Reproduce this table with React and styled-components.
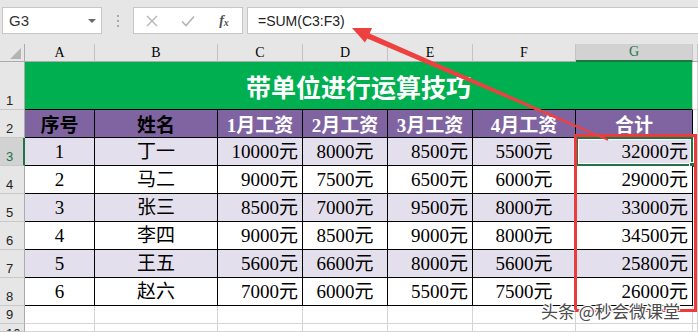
import React from 'react';
import styled, { createGlobalStyle } from 'styled-components';

const Global = createGlobalStyle`
  html, body { margin: 0; padding: 0; background: #e6e6e6; }
  body { width: 698px; height: 332px; overflow: hidden; font-family: "Liberation Sans", "Noto Sans CJK SC", sans-serif; }
  * { box-sizing: border-box; }
`;

const Page = styled.div`
  position: relative;
  width: 698px;
  height: 332px;
  overflow: hidden;
  background: #e6e6e6;
`;

const FormulaBar = styled.div`
  display: flex;
  align-items: center;
  height: 44px;
  padding: 7px 0 10px 2px;
`;

const NameBox = styled.div`
  display: flex;
  align-items: center;
  justify-content: space-between;
  width: 100px;
  height: 27px;
  padding: 0 5px 0 6px;
  background: #fff;
  border: 1px solid #c6c6c6;
  font-size: 15px;
  color: #333;
`;

const Caret = styled.span`
  width: 0;
  height: 0;
  border-left: 4px solid transparent;
  border-right: 4px solid transparent;
  border-top: 4px solid #6a6a6a;
`;

const Grip = styled.div`
  display: flex;
  flex-direction: column;
  align-items: center;
  justify-content: center;
  gap: 3px;
  width: 31px;
  height: 27px;
`;

const GripDot = styled.span`
  width: 2px;
  height: 2px;
  background: #a8a8a8;
`;

const FxBox = styled.div`
  display: flex;
  align-items: center;
  width: 110px;
  height: 27px;
  background: #fff;
  border: 1px solid #c6c6c6;
`;

const FxSlot = styled.div`
  display: flex;
  align-items: center;
  justify-content: center;
  width: 36px;
  height: 100%;
  color: ${p => (p.$dark ? '#505050' : '#b4b4b4')};
  font-family: "Liberation Serif", serif;
  font-style: italic;
  font-weight: bold;
  font-size: 14px;
`;

const FxSub = styled.span`
  font-size: 10px;
  margin-top: 4px;
`;

const FormulaInput = styled.div`
  flex: 1;
  display: flex;
  align-items: center;
  height: 27px;
  margin-left: 4px;
  padding-left: 10px;
  background: #fff;
  border: 1px solid #c6c6c6;
  border-right: none;
  font-size: 14px;
  color: #222;
`;

const Sheet = styled.div`
  display: grid;
  grid-template-columns: 25px 70px 123px 85px 85px 85px 103px 117px 1fr;
  grid-template-rows: 18px 48px repeat(7, 28px) 18px 1fr;
  height: 288px;
  background: #fff;
`;

const Corner = styled.div`
  display: flex;
  align-items: flex-end;
  justify-content: flex-end;
  padding: 0 3px 2px 0;
  background: #e6e6e6;
  border-right: 1px solid #ababab;
  border-bottom: 1px solid #ababab;
`;

const CornerMark = styled.span`
  width: 0;
  height: 0;
  border-left: 11px solid transparent;
  border-bottom: 11px solid #b4b4b4;
`;

const ColHead = styled.div`
  display: flex;
  align-items: center;
  justify-content: center;
  background: ${p => (p.$active ? '#d2d2d2' : '#e6e6e6')};
  border-right: 1px solid #c4c4c4;
  border-bottom: ${p => (p.$active ? '2px solid #217346' : '1px solid #ababab')};
  color: ${p => (p.$active ? '#217346' : '#000')};
  font-family: "Liberation Serif", serif;
  font-size: 14px;
`;

const RowHead = styled.div`
  display: flex;
  align-items: ${p => (p.$top ? 'flex-start' : 'flex-end')};
  overflow: hidden;
  padding: ${p => (p.$top ? '3px 0 0 6px' : '0 0 2px 6px')};
  background: ${p => (p.$active ? '#d2d2d2' : '#e6e6e6')};
  border-right: ${p => (p.$active ? '2px solid #217346' : '1px solid #ababab')};
  border-bottom: 1px solid #c8c8c8;
  color: ${p => (p.$active ? '#217346' : '#222')};
  font-size: 13px;
  line-height: 13px;
`;

const TitleCell = styled.div`
  grid-column: span 7;
  display: flex;
  align-items: center;
  justify-content: center;
  background: #00b050;
  border-right: 1px solid #d4d4d4;
  border-bottom: 1px solid #000;
  color: #fff;
  font-family: "Noto Sans CJK SC", sans-serif;
  font-weight: bold;
  font-size: 25px;
`;

const HeadCell = styled.div`
  display: flex;
  align-items: center;
  justify-content: center;
  background: #8064a2;
  border-right: 1px solid #000;
  border-bottom: 1px solid #000;
  color: ${p => (p.$dark ? '#000' : '#fff')};
  font-family: "Liberation Serif", "Noto Sans CJK SC", serif;
  font-weight: bold;
  font-size: 19px;
`;

const DataCell = styled.div`
  position: relative;
  display: flex;
  align-items: center;
  justify-content: ${p => p.$align};
  padding: 0 4px;
  background: ${p => (p.$band ? '#e4dfec' : '#fff')};
  border-right: 1px solid #000;
  border-bottom: 1px solid #000;
  color: #000;
  font-family: "Liberation Serif", "Noto Sans CJK SC", serif;
  font-size: 19px;
  line-height: 22px;
`;

const Blank = styled.div`
  background: #fff;
  border-right: 1px solid #d4d4d4;
  border-bottom: 1px solid #d4d4d4;
`;

const Selection = styled.div`
  position: absolute;
  top: -1px;
  left: 0;
  right: -1px;
  bottom: -1px;
  border: 2px solid #217346;
  box-shadow: inset 0 0 0 1px #fff;
`;

const FillHandle = styled.div`
  position: absolute;
  right: -4px;
  bottom: -4px;
  width: 6px;
  height: 6px;
  background: #217346;
  border: 1px solid #fff;
`;

const RedBox = styled.div`
  position: absolute;
  left: 574px;
  top: 134px;
  width: 123px;
  height: 178px;
  border: 3px solid #ec3b3b;
  pointer-events: none;
`;

const Annotation = styled.svg`
  position: absolute;
  left: 0;
  top: 0;
  pointer-events: none;
`;

const Watermark = styled.div`
  position: absolute;
  left: 541px;
  top: 303px;
  font-family: "Noto Sans CJK SC", sans-serif;
  font-size: 17px;
  line-height: 16px;
  color: #4a4a4a;
  text-shadow: 1px 1px 0 #fff, -1px -1px 0 #fff, 1px -1px 0 #fff, -1px 1px 0 #fff, 0 0 2px #fff;
  white-space: nowrap;
`;

const letters = ['A', 'B', 'C', 'D', 'E', 'F', 'G'];
const headers = ['序号', '姓名', '1月工资', '2月工资', '3月工资', '4月工资', '合计'];
const aligns = ['center', 'center', 'flex-end', 'center', 'flex-end', 'center', 'flex-end'];
const rows = [
  ['1', '丁一', '10000元', '8000元', '8500元', '5500元', '32000元'],
  ['2', '马二', '9000元', '7500元', '6500元', '6000元', '29000元'],
  ['3', '张三', '8500元', '7000元', '9500元', '8000元', '33000元'],
  ['4', '李四', '9000元', '8500元', '9000元', '8000元', '34500元'],
  ['5', '王五', '5600元', '6600元', '8000元', '5600元', '25800元'],
  ['6', '赵六', '7000元', '6000元', '5500元', '7500元', '26000元'],
];

export default function App() {
  return (
    <Page>
      <Global />
      <FormulaBar>
        <NameBox>
          <span>G3</span>
          <Caret />
        </NameBox>
        <Grip>
          <GripDot />
          <GripDot />
          <GripDot />
        </Grip>
        <FxBox>
          <FxSlot>
            <svg width="12" height="12" viewBox="0 0 12 12">
              <path d="M1 1 L11 11 M11 1 L1 11" stroke="#b4b4b4" strokeWidth="1.4" fill="none" />
            </svg>
          </FxSlot>
          <FxSlot>
            <svg width="14" height="12" viewBox="0 0 14 12">
              <path d="M1 6.5 L5 10.5 L13 1.5" stroke="#b4b4b4" strokeWidth="1.6" fill="none" />
            </svg>
          </FxSlot>
          <FxSlot $dark>
            f<FxSub>x</FxSub>
          </FxSlot>
        </FxBox>
        <FormulaInput>=SUM(C3:F3)</FormulaInput>
      </FormulaBar>

      <Sheet>
        <Corner>
          <CornerMark />
        </Corner>
        {letters.map(l => (
          <ColHead key={l} $active={l === 'G'}>{l}</ColHead>
        ))}
        <ColHead />

        <RowHead>1</RowHead>
        <TitleCell>带单位进行运算技巧</TitleCell>
        <Blank />

        <RowHead>2</RowHead>
        {headers.map((h, i) => (
          <HeadCell key={h} $dark={i < 2}>{h}</HeadCell>
        ))}
        <Blank />

        {rows.map((r, ri) => (
          <React.Fragment key={ri}>
            <RowHead $active={ri === 0}>{ri + 3}</RowHead>
            {r.map((v, ci) => (
              <DataCell key={ci} $band={ri % 2 === 0} $align={aligns[ci]}>
                {v}
                {ri === 0 && ci === 6 && (
                  <Selection>
                    <FillHandle />
                  </Selection>
                )}
              </DataCell>
            ))}
            <Blank />
          </React.Fragment>
        ))}

        {[9, 10].map(n => (
          <React.Fragment key={n}>
            <RowHead $top={n === 10}>{n}</RowHead>
            {Array.from({ length: 8 }).map((_, i) => (
              <Blank key={i} />
            ))}
          </React.Fragment>
        ))}
      </Sheet>

      <RedBox />
      <Annotation width="698" height="332" viewBox="0 0 698 332">
        <polygon
          points="352,28 372,28 369.6,33.4 608.4,139.2 607.6,140.8 367.2,38.6 365,42.6"
          fill="#ef4040"
        />
      </Annotation>
      <Watermark>头条 @秒会微课堂</Watermark>
    </Page>
  );
}
